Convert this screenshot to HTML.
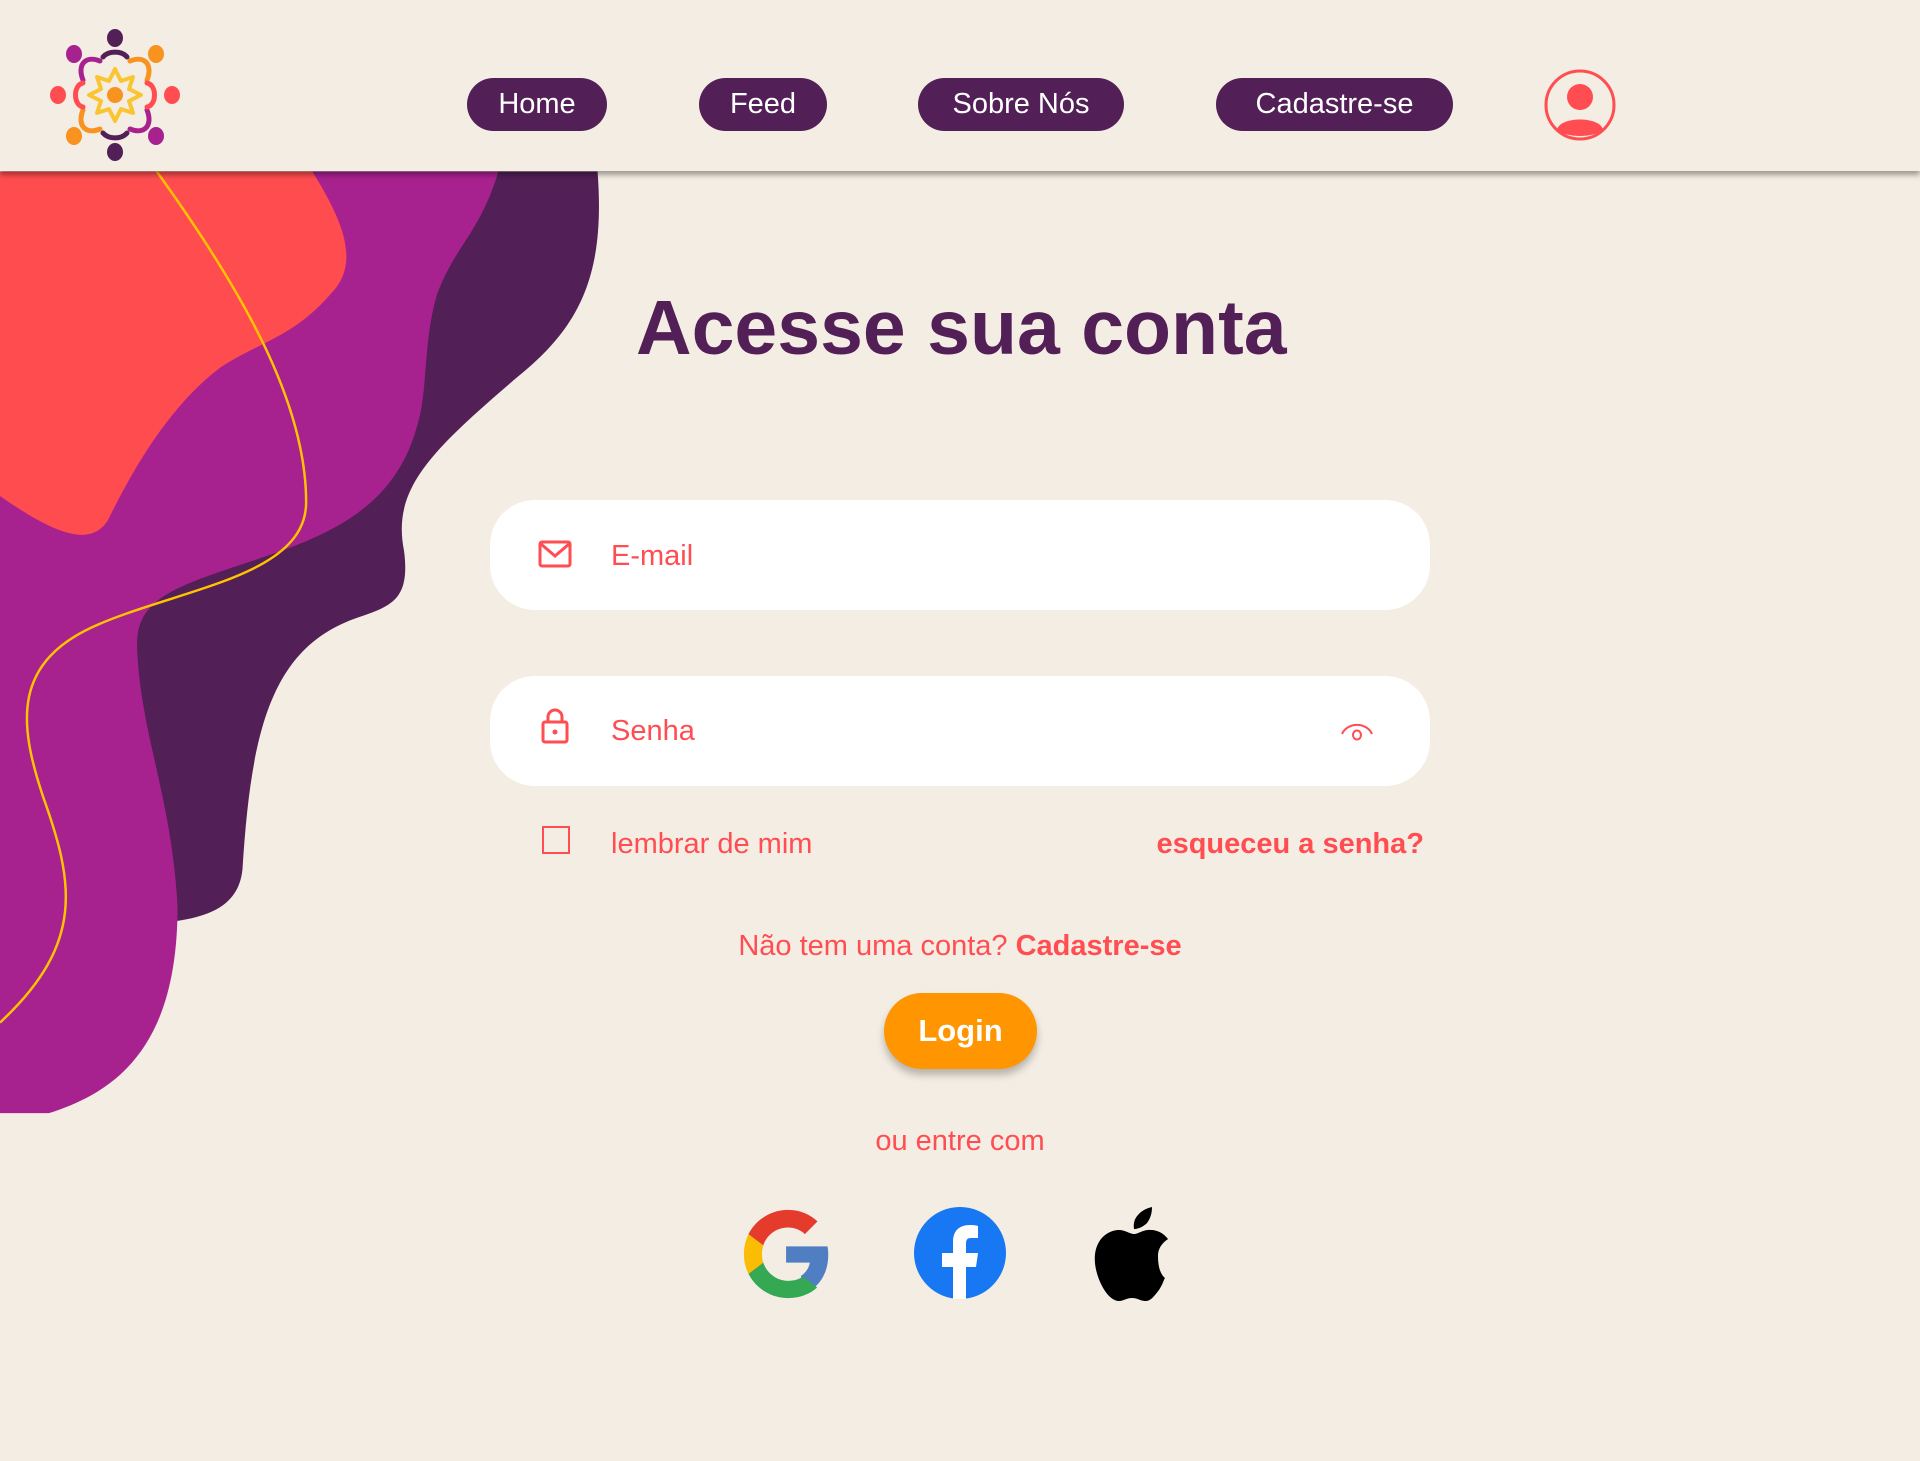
<!DOCTYPE html>
<html><head><meta charset="utf-8"><style>
*{margin:0;padding:0;box-sizing:border-box}
body{width:1920px;height:1461px;background:#f4ede3;position:relative;overflow:hidden;font-family:"Liberation Sans",sans-serif}
.hdr{position:absolute;left:0;top:0;width:1920px;height:171px;background:#f4ede3;box-shadow:0 4px 5px rgba(0,0,0,.35);z-index:2}
.nav{position:absolute;top:78px;height:53px;background:#521f56;color:#fff;border-radius:27px;font-size:29px;line-height:53px;text-align:center}
.t{position:absolute;color:#ff4d52;font-size:29px;white-space:nowrap}
.field{position:absolute;left:490px;width:940px;height:110px;background:#fff;border-radius:45px}
</style></head><body>
<svg style="position:absolute;left:0;top:0" width="1920" height="1461" viewBox="0 0 1568 1193">
<path fill="#521f56" d="M0,140 L488,140 C495,230 470,270 420,310 C350,370 320,400 330,450 C335,490 320,495 290,505 C220,530 205,600 198,710 C195,740 170,748 145,752 L0,752 Z"/>
<path fill="#a8228f" d="M0,140 L407,140 C392,190 372,200 357,240 C345,280 350,320 340,350 C320,420 260,440 200,460 C140,480 110,490 112,530 C115,600 140,650 145,740 C145,850 100,890 40,909 L0,909 Z"/>
<path fill="#ff4d4f" d="M0,140 L255,140 C280,180 295,215 270,240 C240,275 210,280 180,300 C140,330 110,380 88,425 C75,445 50,440 0,405 Z"/>
<path fill="none" stroke="#ffc300" stroke-width="2" d="M128,140 C200,240 250,330 250,410 C250,470 150,480 80,510 C10,540 15,590 35,650 C60,720 70,770 0,835"/>
</svg>
<div class="hdr">
<svg style="position:absolute;left:45px;top:25px" width="140" height="140" viewBox="-70 -70 140 140">
<g stroke-width="5" fill="none" stroke-linecap="round">
<path d="M-12,-38 A14,10 0 0 1 12,-38" stroke="#521f56"/>
<path d="M-12,38 A14,10 0 0 0 12,38" stroke="#521f56"/>
<path d="M-15,-34 C-30,-40 -38,-30 -32,-15" stroke="#a8228f"/>
<path d="M15,34 C30,40 38,30 32,15" stroke="#a8228f"/>
<path d="M15,-34 C30,-40 38,-30 32,-15" stroke="#f7931e"/>
<path d="M-15,34 C-30,40 -38,30 -32,15" stroke="#f7931e"/>
<path d="M-32,-12 C-42,-10 -42,10 -32,12" stroke="#ff4d52"/>
<path d="M32,-12 C42,-10 42,10 32,12" stroke="#ff4d52"/>
<path d="M0,-26 L6,-14 L18,-18 L14,-6 L26,0 L14,6 L18,18 L6,14 L0,26 L-6,14 L-18,18 L-14,6 L-26,0 L-14,-6 L-18,-18 L-6,-14 Z" stroke="#fbc531" stroke-linejoin="round" stroke-width="4"/>
</g>
<circle r="8" fill="#f7931e"/>
<ellipse cx="0" cy="-57" rx="8" ry="9" fill="#521f56"/>
<ellipse cx="0" cy="57" rx="8" ry="9" fill="#521f56"/>
<ellipse cx="-57" cy="0" rx="8" ry="9" fill="#ff4d52"/>
<ellipse cx="57" cy="0" rx="8" ry="9" fill="#ff4d52"/>
<ellipse cx="-41" cy="-41" rx="8" ry="9" fill="#a8228f"/>
<ellipse cx="41" cy="41" rx="8" ry="9" fill="#a8228f"/>
<ellipse cx="41" cy="-41" rx="8" ry="9" fill="#f7931e"/>
<ellipse cx="-41" cy="41" rx="8" ry="9" fill="#f7931e"/>
</svg>
<div class="nav" style="left:467px;width:140px">Home</div>
<div class="nav" style="left:699px;width:128px">Feed</div>
<div class="nav" style="left:918px;width:206px">Sobre Nós</div>
<div class="nav" style="left:1216px;width:237px">Cadastre-se</div>
<svg style="position:absolute;left:1543px;top:68px" width="74" height="74" viewBox="0 0 74 74">
<circle cx="37" cy="37" r="34" fill="none" stroke="#ff4d52" stroke-width="3"/>
<circle cx="37" cy="29" r="13" fill="#ff4d52"/>
<path d="M14,62 C16,48 58,48 60,62 C50,70 24,70 14,62Z" fill="#ff4d52"/>
</svg>
</div>
<div style="position:absolute;left:636px;top:284px;font-size:77px;font-weight:bold;color:#521f56;white-space:nowrap">Acesse sua conta</div>
<div class="field" style="top:500px"></div>
<div class="field" style="top:676px"></div>
<svg style="position:absolute;left:538px;top:540px" width="34" height="28" viewBox="0 0 34 28"><rect x="2" y="2" width="30" height="24" rx="2" fill="none" stroke="#ff4d52" stroke-width="3"/><path d="M3,4 L17,16 L31,4" fill="none" stroke="#ff4d52" stroke-width="3"/></svg>
<div class="t" style="left:611px;top:540px">E-mail</div>
<svg style="position:absolute;left:541px;top:708px" width="28" height="36" viewBox="0 0 28 36"><path d="M7,14 V9 A7,7 0 0 1 21,9 V14" fill="none" stroke="#ff4d52" stroke-width="3"/><rect x="2" y="14" width="24" height="20" rx="2" fill="none" stroke="#ff4d52" stroke-width="3"/><circle cx="14" cy="24" r="2.5" fill="#ff4d52"/></svg>
<div class="t" style="left:611px;top:715px">Senha</div>
<svg style="position:absolute;left:1340px;top:722px" width="34" height="20" viewBox="0 0 34 20"><path d="M2,12 A16,14 0 0 1 32,12" fill="none" stroke="#ff4d52" stroke-width="2"/><ellipse cx="17" cy="13" rx="4" ry="4.5" fill="none" stroke="#ff4d52" stroke-width="2"/></svg>
<div style="position:absolute;left:542px;top:826px;width:28px;height:28px;border:2.5px solid #ff4d52"></div>
<div class="t" style="left:611px;top:828px">lembrar de mim</div>
<div class="t" style="right:496px;top:828px;font-weight:bold">esqueceu a senha?</div>
<div class="t" style="left:0;width:1920px;text-align:center;top:930px">Não tem uma conta? <b>Cadastre-se</b></div>
<div style="position:absolute;left:884px;top:993px;width:153px;height:76px;border-radius:38px;background:#ff9500;color:#fff;font-size:31px;font-weight:bold;text-align:center;line-height:76px;box-shadow:0 6px 8px rgba(0,0,0,.25)">Login</div>
<div class="t" style="left:0;width:1920px;text-align:center;top:1125px">ou entre com</div>
<svg style="position:absolute;left:742px;top:1208px" width="92" height="92" viewBox="0 0 48 48">
<path fill="#4f7ec3" d="M46,24.5c0-1.6-.1-3.1-.4-4.5H24v8.5h12.4c-.5,2.9-2.2,5.3-4.6,6.9v5.7h7.4C43.5,37.2,46,31.4,46,24.5z" transform="translate(-1 0)"/>
<path fill="#34a853" d="M24,47c6.2,0,11.4-2,15.2-5.5l-7.4-5.7c-2,1.4-4.7,2.2-7.8,2.2-6,0-11.1-4.1-12.9-9.5H3.4v5.9C7.2,41.8,15,47,24,47z"/>
<path fill="#fbbc05" d="M11.1,28.5c-.5-1.4-.7-2.9-.7-4.5s.3-3.1.7-4.5v-5.9H3.4C1.9,16.7,1,20.2,1,24s.9,7.3,2.4,10.4z"/>
<path fill="#e53b2c" d="M24,10.2c3.4,0,6.4,1.2,8.8,3.4l6.6-6.6C35.4,3.3,30.2,1,24,1,15,1,7.2,6.2,3.4,13.6l7.7,5.9c1.8-5.4,6.9-9.3,12.9-9.3z"/>
</svg>
<svg style="position:absolute;left:914px;top:1207px" width="92" height="92" viewBox="0 0 92 92">
<circle cx="46" cy="46" r="46" fill="#1877f2"/>
<path fill="#fff" d="M39,92 V60 H28 V46 H39 V35 C39,24 45,18 56,18 C60,18 63,18.5 64,19 V31 H57 C53,31 52,33 52,37 V46 H64 L62,60 H52 V92 Z"/>
</svg>
<svg style="position:absolute;left:1092px;top:1205px" width="80" height="96" viewBox="0 0 80 96">
<path fill="#000" d="M66,51 C66,40 75,35 76,34 C70,26 62,25 59,25 C52,24 46,29 42,29 C38,29 33,25 27,25 C19,25 11,30 7,37 C-2,52 5,74 13,86 C17,92 22,96 27,96 C32,96 34,93 40,93 C46,93 48,96 54,96 C59,96 63,90 67,85 C71,79 72,74 73,73 C72,72 66,68 66,51 Z"/>
<path fill="#000" d="M55,18 C58,14 60,9 60,2 C55,3 49,6 46,10 C43,13 41,18 42,24 C47,24 52,21 55,18 Z"/>
</svg>
</body></html>
